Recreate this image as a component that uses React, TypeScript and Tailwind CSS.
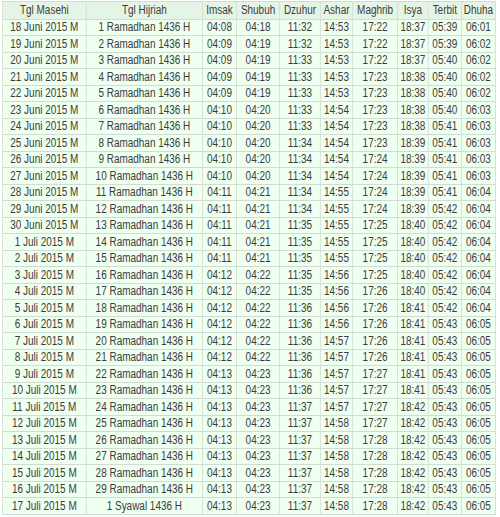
const headers = ['Tgl Masehi', 'Tgl Hijriah', 'Imsak', 'Shubuh', 'Dzuhur', 'Ashar', 'Maghrib', 'Isya', 'Terbit', 'Dhuha'];

// lebar kolom sebelum diskalakan horizontal (0.83) seperti screenshot
const widths = ['w-[101px]', 'w-[140px]', 'w-[41px]', 'w-[52px]', 'w-[49px]', 'w-[39px]', 'w-[54px]', 'w-[37px]', 'w-[40px]', 'w-[41px]'];

const times: string[] = [
    '04:08 04:18 11:32 14:53 17:22 18:37 05:39 06:01',
    '04:09 04:19 11:32 14:53 17:22 18:37 05:39 06:02',
    '04:09 04:19 11:33 14:53 17:22 18:37 05:40 06:02',
    '04:09 04:19 11:33 14:53 17:23 18:38 05:40 06:02',
    '04:09 04:19 11:33 14:53 17:23 18:38 05:40 06:02',
    '04:10 04:20 11:33 14:54 17:23 18:38 05:40 06:03',
    '04:10 04:20 11:33 14:54 17:23 18:38 05:41 06:03',
    '04:10 04:20 11:34 14:54 17:23 18:39 05:41 06:03',
    '04:10 04:20 11:34 14:54 17:24 18:39 05:41 06:03',
    '04:10 04:20 11:34 14:54 17:24 18:39 05:41 06:03',
    '04:11 04:21 11:34 14:55 17:24 18:39 05:41 06:04',
    '04:11 04:21 11:34 14:55 17:24 18:39 05:42 06:04',
    '04:11 04:21 11:35 14:55 17:25 18:40 05:42 06:04',
    '04:11 04:21 11:35 14:55 17:25 18:40 05:42 06:04',
    '04:11 04:21 11:35 14:55 17:25 18:40 05:42 06:04',
    '04:12 04:22 11:35 14:56 17:25 18:40 05:42 06:04',
    '04:12 04:22 11:35 14:56 17:26 18:40 05:42 06:04',
    '04:12 04:22 11:36 14:56 17:26 18:41 05:42 06:04',
    '04:12 04:22 11:36 14:56 17:26 18:41 05:43 06:05',
    '04:12 04:22 11:36 14:57 17:26 18:41 05:43 06:05',
    '04:12 04:22 11:36 14:57 17:26 18:41 05:43 06:05',
    '04:13 04:23 11:36 14:57 17:27 18:41 05:43 06:05',
    '04:13 04:23 11:36 14:57 17:27 18:41 05:43 06:05',
    '04:13 04:23 11:37 14:57 17:27 18:42 05:43 06:05',
    '04:13 04:23 11:37 14:58 17:27 18:42 05:43 06:05',
    '04:13 04:23 11:37 14:58 17:28 18:42 05:43 06:05',
    '04:13 04:23 11:37 14:58 17:28 18:42 05:43 06:05',
    '04:13 04:23 11:37 14:58 17:28 18:42 05:43 06:05',
    '04:13 04:23 11:37 14:58 17:28 18:42 05:43 06:05',
    '04:13 04:23 11:37 14:58 17:28 18:42 05:43 06:05',
];

function masehi(i: number) {
    // 18 Juni .. 30 Juni, lalu 1 Juli ..
    const d = 18 + i;
    return d <= 30 ? `${d} Juni 2015 M` : `${d - 30} Juli 2015 M`;
}

function hijriah(i: number) {
    return i < 29 ? `${i + 1} Ramadhan 1436 H` : '1 Syawal 1436 H';
}

const cell = 'border border-[#d2dcd2] p-0 leading-none text-center whitespace-nowrap';

export default function App() {
    return (
        <div className="w-[500px] h-[517px] overflow-hidden bg-white pt-px pl-[2px] font-['Liberation_Sans',Arial,sans-serif] text-[12px] text-[#3c3c3c]">
            <table className="table-fixed border-collapse w-[594px] origin-top-left scale-x-[0.83]">
                <colgroup>
                    {widths.map((w, i) => (
                        <col key={i} className={w} />
                    ))}
                </colgroup>
                <thead>
                    <tr className="h-[17.5px] bg-[#e5f5e5]">
                        {headers.map((h) => (
                            <th key={h} className={`${cell} font-normal`}>
                                {h}
                            </th>
                        ))}
                    </tr>
                </thead>
                <tbody>
                    {times.map((t, i) => (
                        <tr key={i} className="h-[16.5px] bg-[#effff0]">
                            <td className={cell}>{masehi(i)}</td>
                            <td className={cell}>{hijriah(i)}</td>
                            {t.split(' ').map((v, j) => (
                                <td key={j} className={cell}>
                                    {v}
                                </td>
                            ))}
                        </tr>
                    ))}
                </tbody>
            </table>
        </div>
    );
}
